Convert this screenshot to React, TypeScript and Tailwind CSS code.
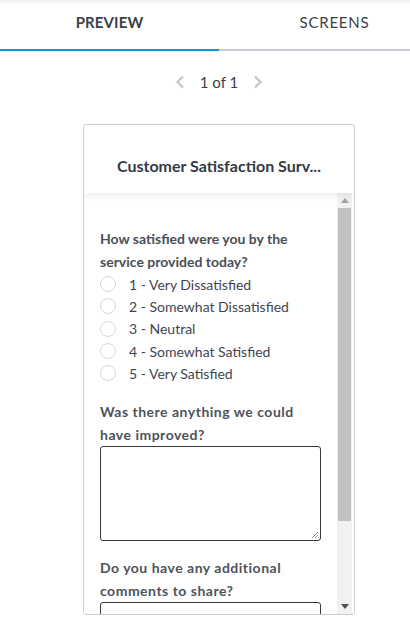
import React from "react";

const options = [
  "1 - Very Dissatisfied",
  "2 - Somewhat Dissatisfied",
  "3 - Neutral",
  "4 - Somewhat Satisfied",
  "5 - Very Satisfied",
];

function Chevron({ dir }: { dir: "left" | "right" }) {
  return (
    <svg width="10" height="14" viewBox="0 0 10 14" className="text-[#c3c9d1]">
      <path
        d={dir === "left" ? "M8 1.5 L2.5 7 L8 12.5" : "M2 1.5 L7.5 7 L2 12.5"}
        fill="none"
        stroke="currentColor"
        strokeWidth="2.4"
      />
    </svg>
  );
}

function Textarea() {
  return (
    <div className="relative w-[221px] h-[95px] border border-[#3a3a3a] rounded-[3px] bg-white">
      <svg width="9" height="9" viewBox="0 0 9 9" className="absolute right-[1px] bottom-[1px]">
        <path d="M8 2 L2 8 M8 5 L5 8" stroke="#8a8a8a" strokeWidth="1" />
      </svg>
    </div>
  );
}

export default function App() {
  return (
    <div
      className="w-[410px] h-[620px] bg-white overflow-hidden"
      style={{ fontFamily: "Lato, 'Open Sans', sans-serif" }}
    >
      {/* tabs */}
      <div className="relative flex h-[51px] shadow-[inset_0_5px_4px_-3px_rgba(0,0,0,0.07)]">
        <div className="w-[219px] flex items-center justify-center pb-[5px] border-b-2 border-[#0b96de] text-[15px] font-bold text-[#3a3f47] tracking-[0.1px]">
          PREVIEW
        </div>
        <div className="flex-1 flex items-center justify-center pl-[40px] pb-[5px] border-b-2 border-[#c5ccd6] text-[15px] text-[#3a3f47] tracking-[0.8px]">
          SCREENS
        </div>
      </div>

      {/* pager */}
      <div className="ml-[83px] w-[272px] h-[73px] pt-[21px] flex items-start justify-center">
        <div className="h-[20px] flex items-center gap-[15px]">
          <Chevron dir="left" />
          <span className="text-[15px] leading-[20px] text-[#3a3f47]">1 of 1</span>
          <Chevron dir="right" />
        </div>
      </div>

      {/* card */}
      <div className="ml-[83px] w-[272px] h-[491px] border border-[#c6d0da] rounded-[3px] flex flex-col overflow-hidden">
        <div className="relative z-10 h-[68px] flex items-end justify-center pb-[17px] shadow-[0_3px_6px_rgba(0,0,0,0.07)]">
          <span className="text-[16px] font-bold text-[#343a45] leading-[20px]">Customer Satisfaction Surv...</span>
        </div>
        <div className="flex-1 flex min-h-0">
          <div className="flex-1 overflow-hidden pl-[16px] pt-[34px]">
            <div className="text-[14px] font-bold text-[#4a4f57] leading-[23px] w-[215px]">
              How satisfied were you by the service provided today?
            </div>
            <div className="flex flex-col">
              {options.map((o) => (
                <div key={o} className="flex items-center h-[22.3px]">
                  <span className="w-[16px] h-[16px] rounded-full border border-[#d5d8dc] bg-white" />
                  <span className="ml-[13px] text-[14px] text-[#3f4550]">{o}</span>
                </div>
              ))}
            </div>

            <div className="mt-[16px] text-[14px] font-bold text-[#4e535b] leading-[23px] tracking-[0.5px] w-[215px]">
              Was there anything we could have improved?
            </div>
            <Textarea />

            <div className="mt-[15px] text-[14px] font-bold text-[#4e535b] leading-[23px] tracking-[0.5px] w-[215px]">
              Do you have any additional comments to share?
            </div>
            <Textarea />
          </div>

          {/* scrollbar */}
          <div className="w-[15px] mr-[2px] bg-[#f1f1f1] flex flex-col items-center">
            <div className="h-[15px] flex items-center justify-center">
              <svg width="8" height="5" viewBox="0 0 8 5">
                <path d="M0 5 L4 0 L8 5 Z" fill="#a3a3a3" />
              </svg>
            </div>
            <div className="w-[13px] h-[313px] bg-[#c1c1c1]" />
            <div className="flex-1" />
            <div className="h-[15px] flex items-center justify-center">
              <svg width="8" height="5" viewBox="0 0 8 5">
                <path d="M0 0 L8 0 L4 5 Z" fill="#505050" />
              </svg>
            </div>
          </div>
        </div>
      </div>
    </div>
  );
}
